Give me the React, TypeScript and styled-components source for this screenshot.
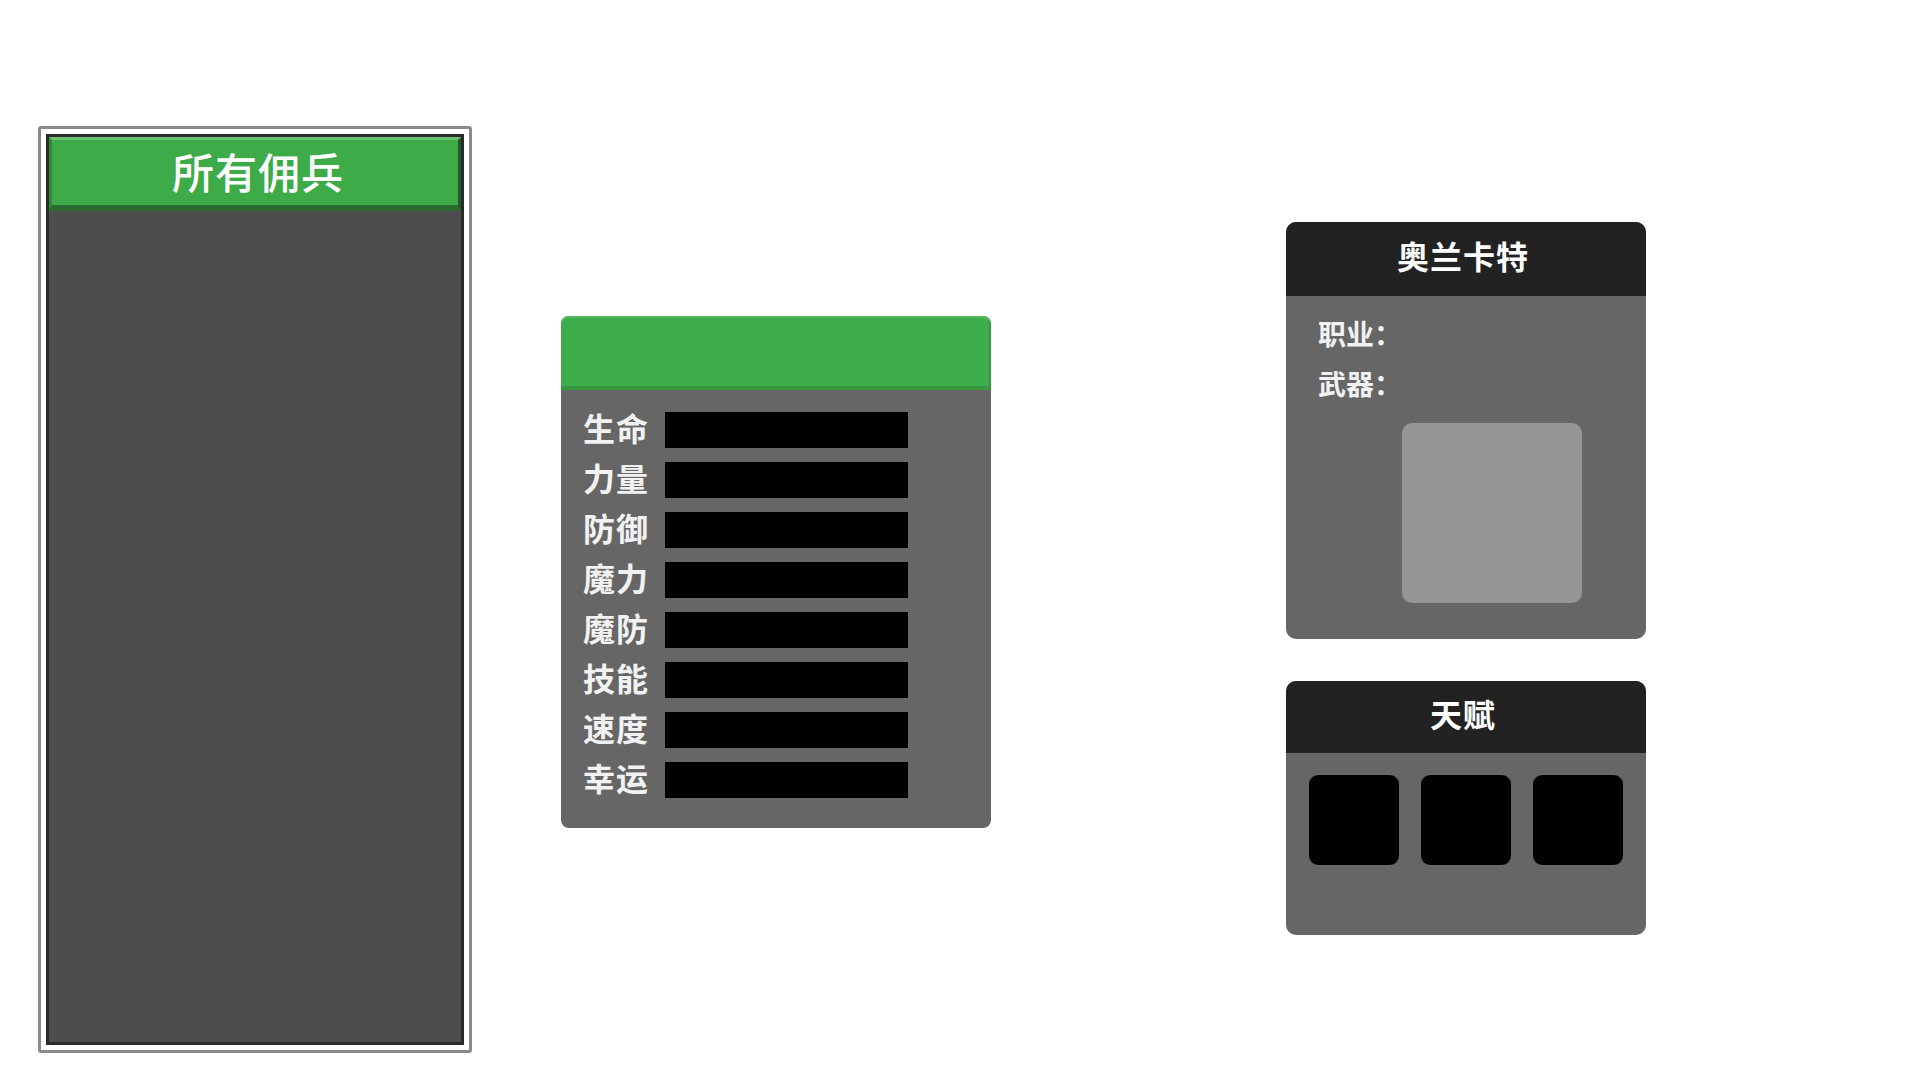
import React from "react";
import styled, { createGlobalStyle } from "styled-components";

const Global = createGlobalStyle`
  html, body { margin: 0; padding: 0; background: #ffffff; }
  body { font-family: "Noto Sans CJK SC", "Noto Sans", sans-serif; }
`;

const Page = styled.div`
  width: 1920px;
  height: 1080px;
  display: flex;
  align-items: flex-start;
  padding-left: 38px;
  box-sizing: border-box;
  overflow: hidden;
`;

const RosterFrame = styled.div`
  margin-top: 126px;
  width: 434px;
  height: 927px;
  box-sizing: border-box;
  border: 3px solid #8a8a8a;
  border-radius: 3px;
  padding: 5px;
  background: #ffffff;
  display: flex;
`;

const RosterInner = styled.div`
  flex: 1;
  border: 3px solid #2b2b2b;
  background: #4d4d4d;
  display: flex;
  flex-direction: column;
`;

const RosterHeader = styled.div`
  height: 74px;
  box-sizing: border-box;
  padding: 0 0 5px 6px;
  background: #3cab48;
  border-top: 3px solid #6cc06f;
  border-left: 3px solid #2f8a38;
  border-right: 3px solid #245a28;
  border-bottom: 6px solid #2b6b30;
  display: flex;
  align-items: center;
  justify-content: center;
  color: #ffffff;
  font-size: 42px;
  font-weight: 500;
  letter-spacing: 1px;
`;

const StatsPanel = styled.div`
  margin-top: 316px;
  margin-left: 89px;
  width: 430px;
  height: 512px;
  background: #666666;
  border-radius: 8px;
  overflow: hidden;
  display: flex;
  flex-direction: column;
`;

const StatsHeader = styled.div`
  height: 74px;
  box-sizing: border-box;
  background: #3dac4a;
  border-bottom: 4px solid #35983f;
  box-shadow: inset 0 2px 0 #52b95c, inset -2px 0 0 #35983f;
  border-radius: 8px 8px 0 0;
`;

const StatsList = styled.div`
  display: flex;
  flex-direction: column;
  gap: 14px;
  padding: 22px 0 0 22px;
`;

const StatRow = styled.div`
  display: flex;
  align-items: center;
  height: 36px;
`;

const StatLabel = styled.span`
  width: 82px;
  padding-bottom: 6px;
  color: #f2f2f2;
  font-size: 32px;
  font-weight: 700;
  line-height: 36px;
  letter-spacing: 1px;
`;

const StatBar = styled.div`
  width: 243px;
  height: 36px;
  background: #000000;
`;

const SideColumn = styled.div`
  margin-top: 222px;
  margin-left: 295px;
  width: 360px;
  display: flex;
  flex-direction: column;
  gap: 42px;
`;

const Card = styled.div`
  background: #666666;
  border-radius: 10px;
  overflow: hidden;
  display: flex;
  flex-direction: column;
`;

const CardHeader = styled.div<{ $h: number }>`
  height: ${(p) => p.$h}px;
  box-sizing: border-box;
  padding: 0 6px 9px 0;
  background: #222222;
  color: #ffffff;
  font-size: 32px;
  font-weight: 700;
  display: flex;
  align-items: center;
  justify-content: center;
  letter-spacing: 1px;
`;

const InfoBody = styled.div`
  padding: 12px 0 36px 32px;
  display: flex;
  flex-direction: column;
`;

const InfoLine = styled.div`
  height: 50px;
  line-height: 50px;
  color: #f2f2f2;
  font-size: 28px;
  font-weight: 700;
`;

const Portrait = styled.div`
  margin-top: 15px;
  margin-left: 84px;
  width: 180px;
  height: 180px;
  border-radius: 10px;
  background: #959595;
`;

const TalentBody = styled.div`
  height: 182px;
  box-sizing: border-box;
  padding: 22px 23px 0 23px;
  display: flex;
  justify-content: space-between;
  align-items: flex-start;
`;

const TalentSlot = styled.div`
  width: 90px;
  height: 90px;
  border-radius: 9px;
  background: #000000;
`;

const stats = ["生命", "力量", "防御", "魔力", "魔防", "技能", "速度", "幸运"];

export default function App() {
  return (
    <>
      <Global />
      <Page>
        <RosterFrame>
          <RosterInner>
            <RosterHeader>所有佣兵</RosterHeader>
          </RosterInner>
        </RosterFrame>

        <StatsPanel>
          <StatsHeader />
          <StatsList>
            {stats.map((s) => (
              <StatRow key={s}>
                <StatLabel>{s}</StatLabel>
                <StatBar />
              </StatRow>
            ))}
          </StatsList>
        </StatsPanel>

        <SideColumn>
          <Card>
            <CardHeader $h={74}>奥兰卡特</CardHeader>
            <InfoBody>
              <InfoLine>职业：</InfoLine>
              <InfoLine>武器：</InfoLine>
              <Portrait />
            </InfoBody>
          </Card>
          <Card>
            <CardHeader $h={72}>天赋</CardHeader>
            <TalentBody>
              <TalentSlot />
              <TalentSlot />
              <TalentSlot />
            </TalentBody>
          </Card>
        </SideColumn>
      </Page>
    </>
  );
}
